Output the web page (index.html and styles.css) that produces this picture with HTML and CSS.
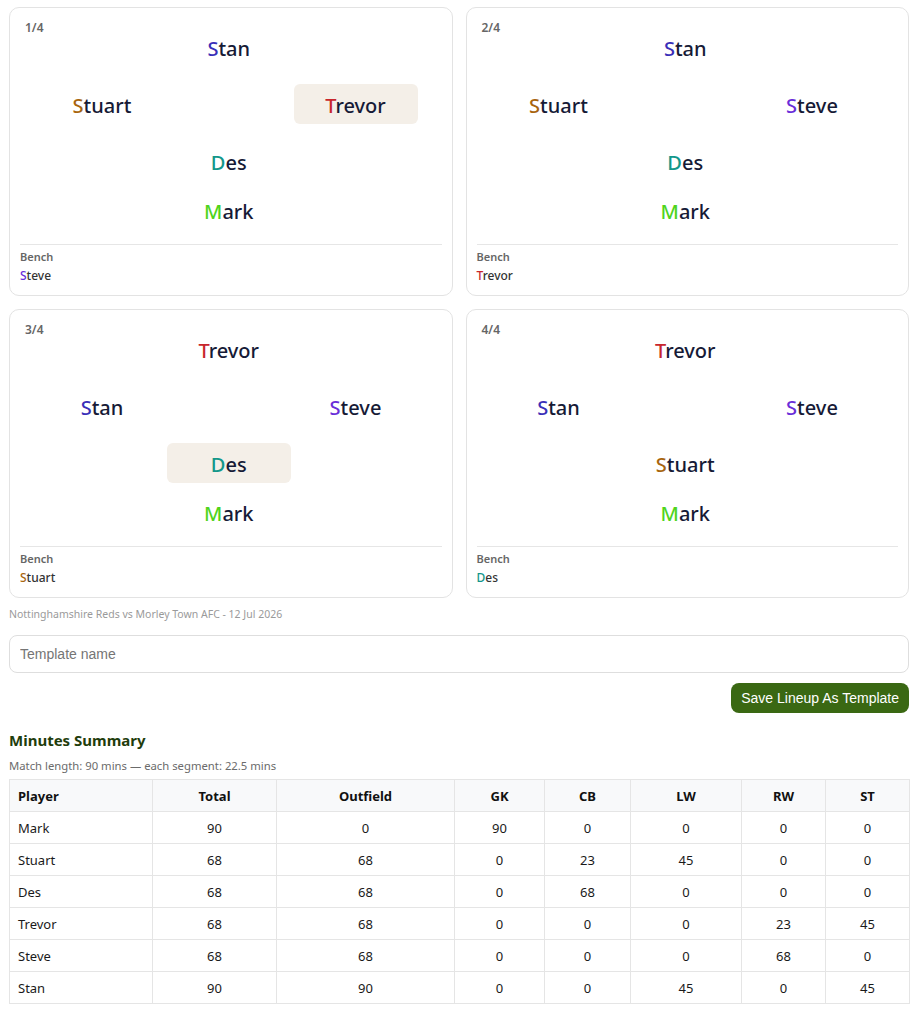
FILE: index.html
```html
<!DOCTYPE html>
<html lang="en">
<head>
    <meta charset="UTF-8">
    <meta name="viewport" content="width=device-width, initial-scale=1.0">
    <title>Lineup</title>
    <link rel="stylesheet" href="styles.css">
</head>
<body>
    <div class="page">
        <div class="cards">
            <div class="card">
                <div class="seg">1/4</div>
                <div class="pitch">
                    <div class="row one"><span class="p"><b class="stan">S</b>tan</span></div>
                    <div class="row two r2"><span class="p"><b class="stuart">S</b>tuart</span><span class="p hl"><b class="trevor">T</b>revor</span></div>
                    <div class="row one r3"><span class="p"><b class="des">D</b>es</span></div>
                    <div class="row one r4"><span class="p"><b class="mark">M</b>ark</span></div>
                </div>
                <div class="bench">
                    <div class="bench-label">Bench</div>
                    <div class="bench-name"><b class="steve">S</b>teve</div>
                </div>
            </div>
            <div class="card">
                <div class="seg">2/4</div>
                <div class="pitch">
                    <div class="row one"><span class="p"><b class="stan">S</b>tan</span></div>
                    <div class="row two r2"><span class="p"><b class="stuart">S</b>tuart</span><span class="p"><b class="steve">S</b>teve</span></div>
                    <div class="row one r3"><span class="p"><b class="des">D</b>es</span></div>
                    <div class="row one r4"><span class="p"><b class="mark">M</b>ark</span></div>
                </div>
                <div class="bench">
                    <div class="bench-label">Bench</div>
                    <div class="bench-name"><b class="trevor">T</b>revor</div>
                </div>
            </div>
            <div class="card">
                <div class="seg">3/4</div>
                <div class="pitch">
                    <div class="row one"><span class="p"><b class="trevor">T</b>revor</span></div>
                    <div class="row two r2"><span class="p"><b class="stan">S</b>tan</span><span class="p"><b class="steve">S</b>teve</span></div>
                    <div class="row one r3"><span class="p hl"><b class="des">D</b>es</span></div>
                    <div class="row one r4"><span class="p"><b class="mark">M</b>ark</span></div>
                </div>
                <div class="bench">
                    <div class="bench-label">Bench</div>
                    <div class="bench-name"><b class="stuart">S</b>tuart</div>
                </div>
            </div>
            <div class="card">
                <div class="seg">4/4</div>
                <div class="pitch">
                    <div class="row one"><span class="p"><b class="trevor">T</b>revor</span></div>
                    <div class="row two r2"><span class="p"><b class="stan">S</b>tan</span><span class="p"><b class="steve">S</b>teve</span></div>
                    <div class="row one r3"><span class="p"><b class="stuart">S</b>tuart</span></div>
                    <div class="row one r4"><span class="p"><b class="mark">M</b>ark</span></div>
                </div>
                <div class="bench">
                    <div class="bench-label">Bench</div>
                    <div class="bench-name"><b class="des">D</b>es</div>
                </div>
            </div>
        </div>

        <div class="match">Nottinghamshire Reds vs Morley Town AFC - 12 Jul 2026</div>

        <input class="tpl" type="text" placeholder="Template name">
        <div class="actions">
            <button class="save">Save Lineup As Template</button>
        </div>

        <h3 class="sum-title">Minutes Summary</h3>
        <div class="sum-sub">Match length: 90 mins — each segment: 22.5 mins</div>

        <table class="mins">
            <thead>
                <tr><th>Player</th><th>Total</th><th>Outfield</th><th>GK</th><th>CB</th><th>LW</th><th>RW</th><th>ST</th></tr>
            </thead>
            <tbody>
                <tr><td>Mark</td><td>90</td><td>0</td><td>90</td><td>0</td><td>0</td><td>0</td><td>0</td></tr>
                <tr><td>Stuart</td><td>68</td><td>68</td><td>0</td><td>23</td><td>45</td><td>0</td><td>0</td></tr>
                <tr><td>Des</td><td>68</td><td>68</td><td>0</td><td>68</td><td>0</td><td>0</td><td>0</td></tr>
                <tr><td>Trevor</td><td>68</td><td>68</td><td>0</td><td>0</td><td>0</td><td>23</td><td>45</td></tr>
                <tr><td>Steve</td><td>68</td><td>68</td><td>0</td><td>0</td><td>0</td><td>68</td><td>0</td></tr>
                <tr><td>Stan</td><td>90</td><td>90</td><td>0</td><td>0</td><td>45</td><td>0</td><td>45</td></tr>
            </tbody>
        </table>
    </div>
</body>
</html>
```

FILE: styles.css
```css
* {
    padding: 0;
    margin: 0;
    box-sizing: border-box;
}
body {
    font-family: "Noto Sans", "Open Sans", sans-serif;
    color: #1a1a2e;
    background: #fff;
}
.page {
    width: 900px;
    margin-left: 9px;
    padding-top: 7px;
}
.cards {
    display: grid;
    grid-template-columns: 1fr 1fr;
    gap: 13px;
}
.card {
    position: relative;
    height: 289px;
    border: 1px solid #e3e3e3;
    border-radius: 10px;
    padding: 18.5px 10px 0;
}
.seg {
    position: absolute;
    left: 15px;
    top: 11px;
    font-size: 12px;
    font-weight: 600;
    color: #666;
}
.pitch {
    padding: 0 24px 0 20px;
}
.row {
    display: flex;
    height: 40px;
    align-items: center;
}
.row.one {
    justify-content: center;
}
.row.two {
    justify-content: space-between;
}
.r2 {
    margin-top: 17px;
}
.r3 {
    margin-top: 17px;
}
.r4 {
    margin-top: 9.5px;
}
.p {
    width: 124px;
    height: 40px;
    padding-top: 3px;
    line-height: 37px;
    text-align: center;
    font-size: 20px;
    font-weight: 500;
    color: #161a36;
    border-radius: 6px;
}
.p b, .bench-name b {
    font-weight: inherit;
}
.hl {
    background: #f4efe8;
}
.stan { color: #3a2fb8; }
.stuart { color: #a8650e; }
.trevor { color: #c8262c; }
.des { color: #13978a; }
.mark { color: #4fd41c; }
.steve { color: #6a2ed8; }

.bench {
    margin-top: 13.5px;
    border-top: 1px solid #e6e6e6;
    padding-top: 5px;
}
.bench-label {
    font-size: 11px;
    font-weight: 600;
    color: #666;
    line-height: 14px;
}
.bench-name {
    margin-top: 4px;
    font-size: 12px;
    font-weight: 500;
    line-height: 16px;
    color: #333;
}
.match {
    margin-top: 9px;
    font-size: 10.5px;
    line-height: 14px;
    color: #9a9a9a;
}
.tpl {
    display: block;
    width: 100%;
    height: 38px;
    margin-top: 14px;
    padding: 0 10px;
    border: 1px solid #dedede;
    border-radius: 8px;
    font-family: "Liberation Sans", Arial, sans-serif;
    font-size: 14px;
    color: #333;
    outline: none;
}
.tpl::placeholder {
    color: #757575;
}
.actions {
    display: flex;
    justify-content: flex-end;
    margin-top: 10px;
}
.save {
    height: 30px;
    padding: 0 10px;
    border: none;
    border-radius: 8px;
    background: #3a6813;
    color: #fff;
    font-family: "Liberation Sans", Arial, sans-serif;
    font-size: 14px;
}
.sum-title {
    margin-top: 17px;
    font-size: 15px;
    font-weight: 700;
    line-height: 20px;
    color: #1f3d0c;
}
.sum-sub {
    margin-top: 9px;
    font-size: 11.3px;
    line-height: 14px;
    color: #6b6b6b;
}
.mins {
    width: 100%;
    margin-top: 6px;
    border-collapse: collapse;
    table-layout: fixed;
    font-size: 13px;
}
.mins th, .mins td {
    height: 32px;
    border: 1px solid #e5e5e5;
    padding: 0 8px;
    text-align: center;
    color: #1a1a1a;
}
.mins th {
    background: #f8f9fa;
    font-weight: 700;
    color: #111;
}
.mins th:first-child, .mins td:first-child {
    text-align: left;
}
.mins th:nth-child(1) { width: 143px; }
.mins th:nth-child(2) { width: 124px; }
.mins th:nth-child(3) { width: 178px; }
.mins th:nth-child(4) { width: 90px; }
.mins th:nth-child(5) { width: 86px; }
.mins th:nth-child(6) { width: 111px; }
.mins th:nth-child(7) { width: 84px; }
.mins th:nth-child(8) { width: 84px; }
```
